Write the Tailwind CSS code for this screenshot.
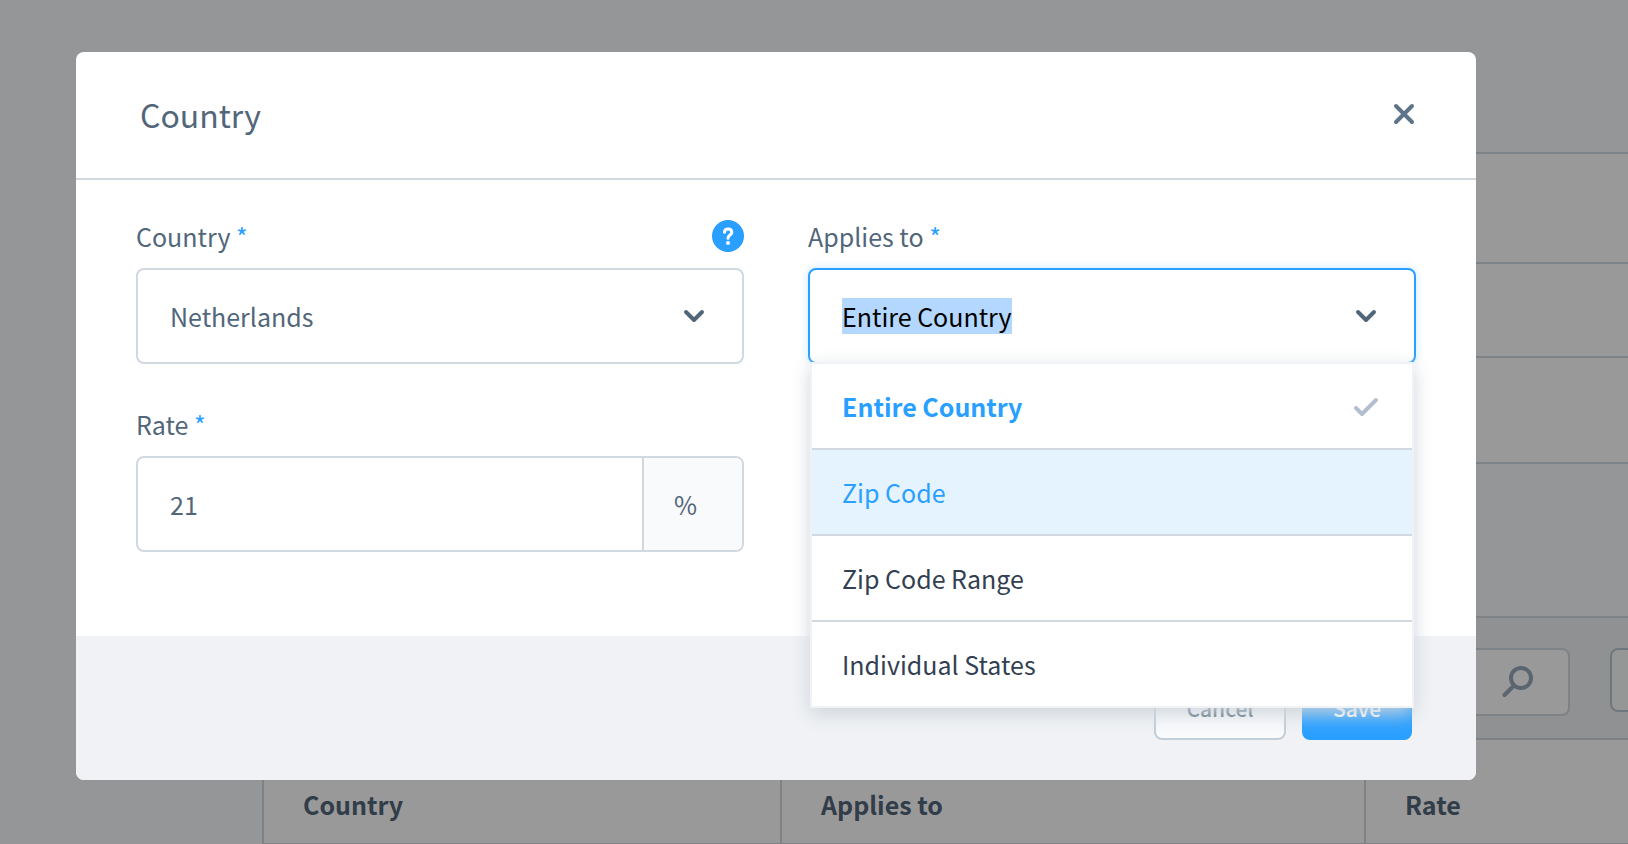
<!DOCTYPE html>
<html lang="en">
<head>
  <meta charset="UTF-8" />
  <meta name="viewport" content="width=device-width, initial-scale=1.0" />
  <title>Country tax rate</title>
  <script src="https://cdn.jsdelivr.net/npm/@tailwindcss/browser@4"></script>
</head>
<body class="min-h-screen overflow-hidden bg-[#f9fafc] font-['Noto_Sans_CJK_SC',sans-serif] text-[25px] leading-9 text-[#52667a]">

  <!-- Page behind the modal -->
  <main class="h-screen overflow-hidden pl-[262px]">
    <div class="h-[152px]"></div>
    <div class="h-[112px] border-y-2 border-[#d1d9e0] bg-white"></div>
    <div class="h-[94px] border-b-2 border-[#d1d9e0] bg-white"></div>
    <div class="h-[106px] border-b-2 border-[#d1d9e0] bg-white"></div>
    <div class="h-[152px]"></div>

    <!-- Search bar -->
    <div class="flex h-[124px] items-start gap-10 border-y-2 border-[#d1d9e0] bg-[#f0f2f5] pt-[30px] pl-10">
      <div class="flex h-[68px] flex-1 items-center rounded-lg border-2 border-[#d1d9e0] bg-white pr-[34px]">
        <input type="search" aria-label="Search countries" class="min-w-0 flex-1 px-8 outline-none" />
        <svg class="h-8 w-8" viewBox="0 0 32 32" fill="none" stroke="#98a9bb" stroke-width="4" stroke-linecap="round">
          <circle cx="19" cy="12" r="10" />
          <path d="M12 19.500L2.500 29" />
        </svg>
      </div>
      <button type="button" aria-label="Add country" class="-mr-20 h-16 w-[98px] shrink-0 rounded-lg border-2 border-[#bac6d2] bg-[#f9fafb]"></button>
    </div>

    <!-- Countries -->
    <table class="w-full table-fixed border-separate border-spacing-0 bg-white text-left text-[#52667a]">
      <thead>
        <tr>
          <th class="w-[518px] border-b-2 border-l-2 border-[#d1d9e0] pt-[46px] pb-[21px] pl-[39px] font-bold">Country</th>
          <th class="w-[584px] border-b-2 border-l-2 border-[#d1d9e0] pt-[46px] pb-[21px] pl-[39px] font-bold">Applies to</th>
          <th class="border-b-2 border-l-2 border-[#d1d9e0] pt-[46px] pb-[21px] pl-[39px] font-bold">Rate</th>
        </tr>
      </thead>
    </table>
  </main>

  <!-- Modal -->
  <div class="fixed inset-0 bg-black/40 pt-[52px] pr-[152px] pl-[76px]">
    <form role="dialog" aria-labelledby="modalTitle" class="rounded-lg bg-white">

      <header class="flex items-center justify-between border-b-2 border-[#d1d9e0] pt-[38px] pr-[60px] pb-10 pl-16">
        <h2 id="modalTitle" class="text-[32px] leading-[48px]">Country</h2>
        <button type="button" aria-label="Close" class="h-6 w-6">
          <svg class="h-6 w-6" viewBox="0 0 24 24" fill="none" stroke="#5d748a" stroke-width="4" stroke-linecap="round">
            <path d="M4 4l16 16M20 4L4 20" />
          </svg>
        </button>
      </header>

      <div class="grid grid-cols-2 gap-x-16 gap-y-10 px-[60px] pt-9 pb-[84px]">

        <!-- Country -->
        <div>
          <div class="mb-3 flex h-10 items-center justify-between">
            <label for="country">Country <span class="text-[#299fff]">*</span></label>
            <button type="button" aria-label="Help" class="h-8 w-8">
              <svg class="h-8 w-8" viewBox="0 0 32 32" fill="none">
                <circle cx="16" cy="16" r="16" fill="#299fff" />
                <path d="M12.500 12.300c0-2 1.600-3.300 3.700-3.300s3.600 1.300 3.600 3.200c0 2.700-3.800 2.900-3.800 6" stroke="#fff" stroke-width="3" stroke-linecap="round" stroke-linejoin="round" />
                <circle cx="16" cy="23" r="2" fill="#fff" />
              </svg>
            </button>
          </div>
          <div class="relative">
            <select id="country" class="h-24 w-full appearance-none rounded-lg border-2 border-[#d1d9e0] bg-white px-8 outline-none">
              <option>Netherlands</option>
            </select>
            <svg class="pointer-events-none absolute top-9 right-[38px] h-6 w-6" viewBox="0 0 24 24" fill="none" stroke="#52667a" stroke-width="4" stroke-linecap="round" stroke-linejoin="round">
              <path d="M4 8l8 8 8-8" />
            </svg>
          </div>
        </div>

        <!-- Applies to -->
        <div>
          <div class="mb-3 flex h-10 items-center">
            <label for="appliesTo">Applies to <span class="text-[#299fff]">*</span></label>
          </div>
          <div class="relative">
            <input id="appliesTo" type="text" role="combobox" aria-expanded="true" aria-controls="appliesToList" value="Entire Country" class="h-24 w-full rounded-lg border-2 border-[#299fff] bg-white px-8 shadow-[0_0_8px_#299fff40] outline-none selection:bg-[#b3d7ff] selection:text-black" />
            <svg class="pointer-events-none absolute top-9 right-[38px] h-6 w-6" viewBox="0 0 24 24" fill="none" stroke="#52667a" stroke-width="4" stroke-linecap="round" stroke-linejoin="round">
              <path d="M4 8l8 8 8-8" />
            </svg>

            <ul id="appliesToList" role="listbox" class="absolute inset-x-[2px] top-[94px] z-10 divide-y-2 divide-[#d1d9e0] border-2 border-[#f0f2f5] bg-white text-[#333f52] shadow-[0_6px_18px_#cdd5db]">
              <li role="option" aria-selected="true" class="flex items-center justify-between py-6 pr-8 pl-[30px] font-bold text-[#299fff]">
                Entire Country
                <svg class="h-6 w-7" viewBox="0 0 28 24" fill="none" stroke="#b3bfd0" stroke-width="4" stroke-linecap="round" stroke-linejoin="round">
                  <path d="M4 14l6 6 14-14" />
                </svg>
              </li>
              <li role="option" class="bg-[#e5f3ff] py-6 pl-[30px] text-[#299fff]">Zip Code</li>
              <li role="option" class="py-6 pl-[30px]">Zip Code Range</li>
              <li role="option" class="py-6 pl-[30px]">Individual States</li>
            </ul>
          </div>
        </div>

        <!-- Rate -->
        <div>
          <div class="mb-3 flex h-10 items-center">
            <label for="rate">Rate <span class="text-[#299fff]">*</span></label>
          </div>
          <div class="flex h-24 overflow-hidden rounded-lg border-2 border-[#d1d9e0]">
            <input id="rate" type="text" value="21" class="min-w-0 flex-1 px-8 outline-none" />
            <span class="flex w-[100px] items-center border-l-2 border-[#d1d9e0] bg-[#f9fafc] pl-[30px]">%</span>
          </div>
        </div>
      </div>

      <footer class="flex justify-end gap-4 rounded-b-lg bg-[#f0f2f5] py-10 pr-16 text-[21px]">
        <button type="button" class="h-16 w-[132px] rounded-lg border-2 border-[#c3cedb] bg-[#f9fafc] font-medium">Cancel</button>
        <button type="submit" class="h-16 w-[110px] rounded-lg bg-[#299fff] font-medium text-white">Save</button>
      </footer>
    </form>
  </div>

  <script>
    // Preselect the current value so typing replaces it
    document.getElementById("appliesTo").select();
  </script>

</body>
</html>
